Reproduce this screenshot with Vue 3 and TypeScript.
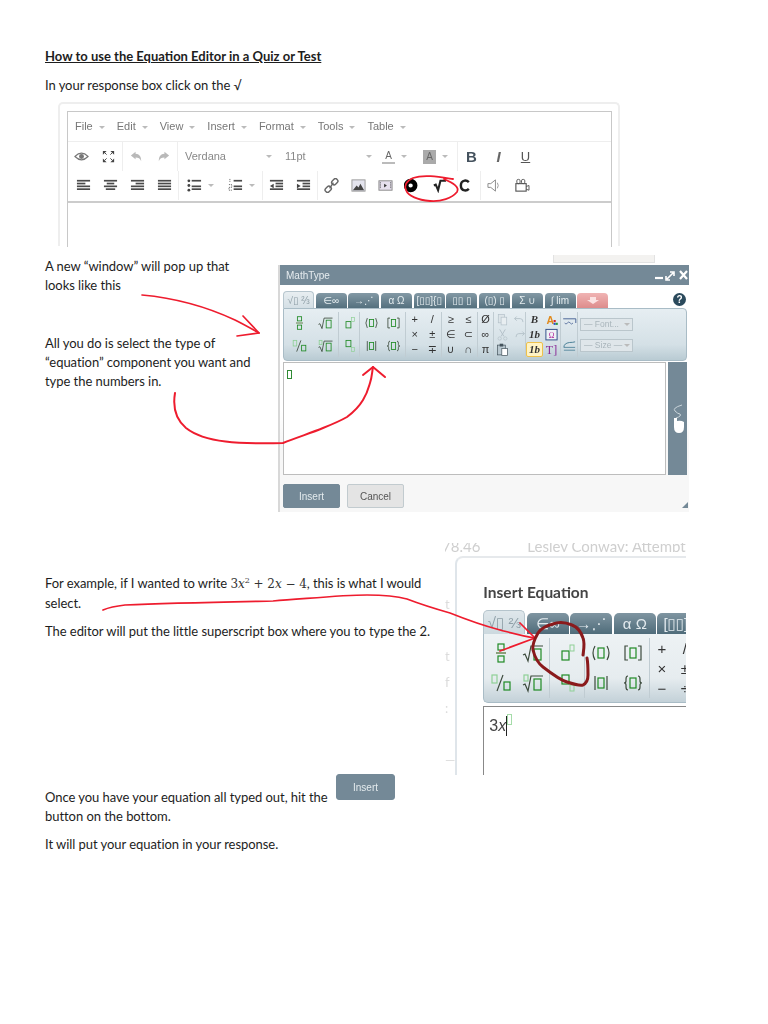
<script setup lang="ts">
type Cell = { i?: string; t?: string; hl?: boolean; serif?: boolean; purple?: boolean }
type Group = { w: number; cols: number; rows: number; cells: Cell[] }

const green = '#1f8a24'
const pale = '#8fd096'
const ink = '#3c4a3c'

function box(x: number, y: number, w: number, h: number, c = green, sw = 1.2) {
  return `<rect x="${x}" y="${y}" width="${w}" height="${h}" fill="none" stroke="${c}" stroke-width="${sw}"/>`
}
function line(d: string, c = ink, sw = 1.2) {
  return `<path d="${d}" fill="none" stroke="${c}" stroke-width="${sw}"/>`
}

/* 公式面板里的小符号 */
const mathIcons: Record<string, string> = {
  frac: box(9, 1, 6, 6) + line('M7 10h10', '#4a6a2a') + box(9, 13, 6, 6),
  sqrt: line('M2 12l2-1 3 7 3-15h12') + box(13, 6, 7, 11),
  slash: box(3, 2, 5, 8, pale) + line('M14 2L8 18') + box(15, 9, 6, 8),
  root: box(3, 2, 4, 6, pale) + line('M2 12l2-1 3 7 3-15h12') + box(13, 6, 7, 11),
  sup: box(7, 8, 7, 9) + box(15, 2, 4, 6, pale, 1),
  sub: box(7, 2, 7, 9) + box(15, 12, 4, 6, pale, 1),
  paren: line('M6 3q-4 7 0 14M18 3q4 7 0 14') + box(9, 5, 6, 10),
  brack: line('M7 3H4v14h3M17 3h3v14h-3') + box(9, 5, 6, 10),
  abs: line('M6 3v14M18 3v14') + box(9, 5, 6, 10),
  brace: line('M7 3q-2 0-2 3v2q0 2-2 2 2 0 2 2v2q0 3 2 3M17 3q2 0 2 3v2q0 2 2 2-2 0-2 2v2q0 3-2 3') + box(9, 5, 6, 10),
  copy: '<rect x="6" y="2" width="9" height="12" fill="#dde5e9" stroke="#b4c1c9"/><rect x="10" y="6" width="8" height="11" fill="#e8eef1" stroke="#b4c1c9"/>',
  cut: line('M8 2l6 10M16 2l-6 10', '#b4c1c9', 1.4) + '<circle cx="8" cy="15" r="2.4" fill="none" stroke="#b4c1c9"/><circle cx="16" cy="15" r="2.4" fill="none" stroke="#b4c1c9"/>',
  paste: '<rect x="5" y="3" width="11" height="14" fill="#b9c8d0" stroke="#44535c"/><rect x="8" y="1" width="5" height="4" fill="#44535c"/><rect x="11" y="8" width="8" height="10" fill="#fff" stroke="#44535c"/>',
  undo: line('M8 5l-3 3 3 3M5 8h8q4 0 4 5', '#b4c1c9', 1.3),
  redo: line('M16 5l3 3-3 3M19 8h-8q-4 0-4 5', '#b4c1c9', 1.3),
  colorA: '<text x="5" y="15" font-size="15" font-weight="700" font-family="Liberation Sans" fill="#e08a1e">A</text><rect x="15" y="10" width="3" height="3" fill="#d22"/><rect x="15" y="14" width="3" height="3" fill="#2a4fd0"/><rect x="18" y="14" width="3" height="3" fill="#2a9a3a"/>',
  omega: '<rect x="4" y="2" width="16" height="15" fill="#eef2f6" stroke="#33508a" stroke-width="1.4"/><text x="12" y="14" text-anchor="middle" font-size="11" font-family="Liberation Serif" fill="#b0289a">Ω</text>',
  rtl: line('M3 4h18v6', '#33508a') + line('M5 10q2 3 4 0t4 0 4 0', '#33508a', 1),
  ltr: line('M4 12q0-6 8-7 5 0 8-1', '#33708a') + line('M4 12h16M4 16h16', '#33708a', 1),
}

const mtGroups: Group[] = [
  { w: 53, cols: 2, rows: 2, cells: [{ i: 'frac' }, { i: 'sqrt' }, { i: 'slash' }, { i: 'root' }] },
  { w: 21, cols: 1, rows: 2, cells: [{ i: 'sup' }, { i: 'sub' }] },
  { w: 46, cols: 2, rows: 2, cells: [{ i: 'paren' }, { i: 'brack' }, { i: 'abs' }, { i: 'brace' }] },
  { w: 36, cols: 2, rows: 3, cells: [{ t: '+' }, { t: '/' }, { t: '×' }, { t: '±' }, { t: '−' }, { t: '∓' }] },
  { w: 36, cols: 2, rows: 3, cells: [{ t: '≥' }, { t: '≤' }, { t: '∈' }, { t: '⊂' }, { t: '∪' }, { t: '∩' }] },
  { w: 16, cols: 1, rows: 3, cells: [{ t: 'Ø' }, { t: '∞' }, { t: 'π' }] },
  { w: 32, cols: 2, rows: 3, cells: [{ i: 'copy' }, { i: 'undo' }, { i: 'cut' }, { i: 'redo' }, { i: 'paste' }, {}] },
  {
    w: 35,
    cols: 2,
    rows: 3,
    cells: [
      { t: 'B', serif: true },
      { i: 'colorA' },
      { t: '1b', serif: true },
      { i: 'omega' },
      { t: '1b', hl: true },
      { t: 'T]', purple: true },
    ],
  },
  { w: 17, cols: 1, rows: 2, cells: [{ i: 'rtl' }, { i: 'ltr' }] },
]

const eqGroups: Group[] = [
  { w: 66, cols: 2, rows: 2, cells: [{ i: 'frac' }, { i: 'sqrt' }, { i: 'slash' }, { i: 'root' }] },
  { w: 35, cols: 1, rows: 2, cells: [{ i: 'sup' }, { i: 'sub' }] },
  { w: 65, cols: 2, rows: 2, cells: [{ i: 'paren' }, { i: 'brack' }, { i: 'abs' }, { i: 'brace' }] },
  { w: 46, cols: 2, rows: 3, cells: [{ t: '+' }, { t: '/' }, { t: '×' }, { t: '±' }, { t: '−' }, { t: '÷' }] },
]

const mtTabs = ['', '∈∞', '→⋰', 'α Ω', '[▯▯]{▯', '▯▯ ▯', '(▯) ▯', 'Σ ∪', '∫ lim', '']
const eqTabs = ['', '∈∞', '→⋰', 'α Ω', '[▯▯]{']

const menus = ['File', 'Edit', 'View', 'Insert', 'Format', 'Tools', 'Table']

const g1 = '#4a4a4a'
const g2 = '#b9b9b9'
function bars(rows: [number, number][], c = g1) {
  return rows.map(([x, w], n) => `<rect x="${x}" y="${2 + n * 3}" width="${w}" height="1.8" fill="${c}"/>`).join('')
}

/* 编辑器工具栏图标 */
const edIcons: Record<string, string> = {
  eye: '<path d="M2 8q7-7 14 0-7 7-14 0z" fill="none" stroke="#777" stroke-width="1.2"/><circle cx="9" cy="8" r="2.6" fill="#777"/>',
  full: '<path d="M3 2h4L3 6zM15 2h-4l4 4zM3 14h4l-4-4zM15 14h-4l4-4z" fill="#444"/><path d="M5 4l2 2M13 4l-2 2M5 12l2-2M13 12l-2-2" stroke="#444"/>',
  undo: `<path d="M8 3L3 7l5 4V9c3 0 5 1 6 4 0-5-2-8-6-8z" fill="${g2}"/>`,
  redo: `<path d="M10 3l5 4-5 4V9c-3 0-5 1-6 4 0-5 2-8 6-8z" fill="${g2}"/>`,
  left: bars([[2, 14], [2, 9], [2, 14], [2, 14]]),
  center: bars([[2, 14], [5, 8], [2, 14], [4, 10]]),
  right: bars([[2, 14], [7, 9], [2, 14], [2, 14]]),
  just: bars([[2, 14], [2, 14], [2, 14], [2, 14]]),
  bullets: bars([[6, 10], [6, 0], [6, 10], [6, 10]]) + '<circle cx="3" cy="3" r="1.5" fill="#444"/><circle cx="3" cy="8" r="1.5" fill="#444"/><circle cx="3" cy="13" r="1.5" fill="#444"/>',
  nums: bars([[7, 9], [7, 0], [7, 9], [7, 9]]) + '<path d="M3 1v4M2 7h3v3H2v3h3" fill="none" stroke="#555" stroke-dasharray="1 1"/>',
  outdent: bars([[2, 14], [8, 8], [8, 8], [2, 14]]) + '<path d="M6 6v5L2 8.5z" fill="#444"/>',
  indent: bars([[2, 14], [8, 8], [8, 8], [2, 14]]) + '<path d="M2 6v5l4-2.5z" fill="#444"/>',
  link: '<g fill="none" stroke="#666" stroke-width="1.5"><rect x="9" y="1.5" width="7" height="5" rx="2.2" transform="rotate(-45 12.5 4)"/><rect x="2" y="9.5" width="7" height="5" rx="2.2" transform="rotate(-45 5.5 12)"/><path d="M7 11l4-6"/></g>',
  image: '<rect x="2" y="2" width="14" height="12" fill="#e4e4ee" stroke="#999"/><path d="M3 13l4-5 2 2 2-4 4 7z" fill="#444"/>',
  media: '<rect x="2" y="3" width="14" height="10" fill="#e6e0ee" stroke="#888"/><path d="M7.5 6v4l3-2z" fill="#333"/><path d="M3.5 4.5v7M14.5 4.5v7" stroke="#555" stroke-dasharray="1.3 1"/>',
  blob: '<ellipse cx="7" cy="8" rx="4.8" ry="4.6" fill="none" stroke="#000" stroke-width="5"/>',
  sqrt: '<path d="M3 8l2-1 2.5 6L10 3h6" fill="none" stroke="#222" stroke-width="2.2"/>',
  c: '<path d="M11.5 4.5Q9.5 2.5 7 2.8 3 3.4 3 8t4 5.2q2.5.3 4.5-1.7" fill="none" stroke="#222" stroke-width="2.6"/>',
  speaker: '<path d="M2 6h3l5-4v12l-5-4H2z" fill="none" stroke="#888"/><path d="M12 5q2 3 0 6" fill="none" stroke="#999"/>',
  video: '<rect x="3" y="6" width="11" height="8" fill="none" stroke="#555" stroke-width="1.2"/><rect x="4" y="1.5" width="3.5" height="4.5" rx="1.5" fill="none" stroke="#555"/><rect x="9" y="1.5" width="3.5" height="4.5" rx="1.5" fill="none" stroke="#555"/><path d="M14 9l3-1v5l-3-1" fill="none" stroke="#555"/>',
}

const row2 = [
  { w: 108, items: ['left', 'center', 'right', 'just'] },
  { w: 83, items: ['bullets', 'nums'], caret: true },
  { w: 54, items: ['outdent', 'indent'] },
  { w: 162, items: ['link', 'image', 'media', 'blob', 'sqrt', 'c'] },
  { w: 54, items: ['speaker', 'video'] },
]

const ghostLetters = ['', '', 't', '', 't', 'f', ':', '', '—']
</script>

<template>
  <div class="page">
    <h1 class="title">How to use the Equation Editor in a Quiz or Test</h1>
    <p class="intro">In your response box click on the √</p>

    <!-- 富文本编辑器截图 -->
    <div class="editor-shot">
      <div class="editor">
        <div class="menubar">
          <span v-for="m in menus" :key="m" class="menu">{{ m }}<i class="caret" /></span>
        </div>
        <div class="tools">
          <div class="tbar tbar-first">
            <div class="tgroup">
              <span class="btn"><svg viewBox="0 0 18 16" v-html="edIcons.eye" /></span>
              <span class="btn"><svg viewBox="0 0 18 16" v-html="edIcons.full" /></span>
            </div>
            <div class="tgroup sep">
              <span class="btn"><svg viewBox="0 0 18 16" v-html="edIcons.undo" /></span>
              <span class="btn"><svg viewBox="0 0 18 16" v-html="edIcons.redo" /></span>
            </div>
            <div class="tgroup sep">
              <span class="pick font-pick">Verdana<i class="caret" /></span>
              <span class="pick size-pick">11pt<i class="caret" /></span>
              <span class="swatch s-text"><b class="a-under">A</b><i class="caret" /></span>
              <span class="swatch s-back"><b class="a-fill">A</b><i class="caret" /></span>
            </div>
            <div class="tgroup sep style-btns">
              <span class="btn fmt fmt-b">B</span>
              <span class="btn fmt fmt-i">I</span>
              <span class="btn fmt fmt-u">U</span>
            </div>
          </div>
          <div class="tbar">
            <div
              v-for="(g, n) in row2"
              :key="n"
              class="tgroup"
              :class="{ sep: n > 0 }"
              :style="{ width: g.w + 'px' }"
            >
              <span v-for="it in g.items" :key="it" class="btn" :class="{ 'btn-wide': g.caret }">
                <svg viewBox="0 0 18 16" v-html="edIcons[it]" />
                <i v-if="g.caret" class="caret" />
              </span>
            </div>
          </div>
        </div>
        <div class="edit-area" />
      </div>
    </div>

    <section class="mt-section">
      <div class="col-a">
        <p>A new “window” will pop up that<br />looks like this</p>
        <p class="gap-big">All you do is select the type of<br />“equation” component you want and<br />type the numbers in.</p>
      </div>
      <div class="strip" />

      <!-- MathType 窗口 -->
      <div class="mt-win">
        <div class="mt-title">
          <span>MathType</span>
          <svg viewBox="0 0 34 12" width="34" height="12">
            <path d="M1 9h8" stroke="#fff" stroke-width="2.2" />
            <path d="M13 10l6-6M16 3h4v4M12 7v4h4" stroke="#fff" stroke-width="1.6" fill="none" />
            <path d="M26 2l7 8M33 2l-7 8" stroke="#fff" stroke-width="2.2" />
          </svg>
        </div>
        <div class="mt-body">
          <div class="mt-tabs">
            <span
              v-for="(t, n) in mtTabs"
              :key="n"
              class="tab"
              :class="{ 'tab-on': n === 0, 'tab-red': n === 9 }"
            >
              <template v-if="n === 0">√▯ ⅔</template>
              <svg v-else-if="n === 9" viewBox="0 0 18 10" width="18" height="10">
                <path d="M6 1h6v3h3l-6 4-6-4h3z" fill="#fbe3e3" />
              </svg>
              <template v-else>{{ t }}</template>
            </span>
            <span class="help">?</span>
          </div>
          <div class="mt-panel">
            <div
              v-for="(g, n) in mtGroups"
              :key="n"
              class="pal-group"
              :style="{
                width: g.w + 'px',
                gridTemplateColumns: `repeat(${g.cols}, 1fr)`,
                gridTemplateRows: `repeat(${g.rows}, 1fr)`,
              }"
            >
              <span
                v-for="(c, k) in g.cells"
                :key="k"
                class="cell"
                :class="{ 'cell-hl': c.hl, 'cell-serif': c.serif, 'cell-purple': c.purple }"
              >
                <svg v-if="c.i" viewBox="0 0 24 20" width="17" height="14" v-html="mathIcons[c.i]" />
                <template v-else>{{ c.t }}</template>
              </span>
            </div>
            <div class="selects">
              <span class="sel">— Font...<i class="caret" /></span>
              <span class="sel">— Size —<i class="caret" /></span>
            </div>
          </div>
          <div class="mt-edit">
            <div class="mt-input"><i class="mt-slot" /></div>
            <div class="mt-side">
              <svg viewBox="0 0 18 30" width="18" height="30">
                <path d="M13 1Q3 4 6 7t5 3q2 2-4 4" fill="none" stroke="#c9d4da" stroke-width="1" />
                <path d="M5 14v9q0 6 5 6t5-6v-5q-3-2-7-1v-3z" fill="#fff" />
              </svg>
            </div>
          </div>
          <div class="mt-actions">
            <button class="btn-insert">Insert</button>
            <button class="btn-cancel">Cancel</button>
          </div>
          <i class="resize" />
        </div>
      </div>
    </section>

    <section class="eq-section">
      <div class="col-b">
        <p>
          For example, if I wanted to write
          <span class="formula">3<em>x</em><sup>2</sup> + 2<em>x</em> − 4</span>, this is what I would<br />select.
        </p>
        <p class="gap-small">The editor will put the little superscript box where you to type the 2.</p>
      </div>

      <!-- Insert Equation 截图 -->
      <div class="eq-shot">
        <div class="ghost-head"><span>78.46</span><span>Lesley Conway: Attempt</span></div>
        <div class="eq-main">
          <div class="ghost-col">
            <span v-for="(l, n) in ghostLetters" :key="n">{{ l }}</span>
          </div>
          <div class="eq-win">
            <div class="eq-title">Insert Equation</div>
            <div class="eq-tabs">
              <span v-for="(t, n) in eqTabs" :key="n" class="eq-tab" :class="{ 'tab-on': n === 0 }">
                <template v-if="n === 0">√▯ ⅔</template>
                <template v-else>{{ t }}</template>
              </span>
            </div>
            <div class="eq-panel">
              <div
                v-for="(g, n) in eqGroups"
                :key="n"
                class="pal-group"
                :style="{
                  width: g.w + 'px',
                  gridTemplateColumns: `repeat(${g.cols}, 1fr)`,
                  gridTemplateRows: `repeat(${g.rows}, 1fr)`,
                }"
              >
                <span v-for="(c, k) in g.cells" :key="k" class="cell">
                  <svg v-if="c.i" viewBox="0 0 24 20" width="24" height="20" v-html="mathIcons[c.i]" />
                  <template v-else>{{ c.t }}</template>
                </span>
              </div>
            </div>
            <div class="eq-input">
              <span class="eq-value">3<em>x</em></span><i class="eq-cursor" /><i class="eq-slot" />
            </div>
          </div>
        </div>
      </div>
    </section>

    <section class="last-section">
      <div class="col-c">
        <p>Once you have your equation all typed out, hit the<br />button on the bottom.</p>
        <p class="gap-small">It will put your equation in your response.</p>
      </div>
      <button class="btn-insert btn-lone">Insert</button>
    </section>

    <!-- 手绘批注 -->
    <svg class="notes" viewBox="0 0 768 1024" width="768" height="1024" aria-hidden="true">
      <g fill="none" stroke="#ee1c2e" stroke-linecap="round" stroke-linejoin="round">
        <path stroke-width="1.8" d="M453 179C440 177 424 174 413 178C406 181 404 186 406 190C408 196 418 200 430 201C441 202 452 198 457 192C460 187 453 183 444 179" />
        <path stroke-width="1.7" d="M142 295C175 298 205 306 235 320C245 325 252 329 259 333" />
        <path stroke-width="1.7" d="M243 316L259 333L237 336" />
        <path stroke-width="2" d="M175 393C173 405 174 418 186 428C205 443 240 444 283 443C298 437 311 433 323 428C333 424 340 421 347 417C355 411 360 405 363 400C368 392 369 386 370 383C372 377 372 372 373 367" />
        <path stroke-width="2" d="M363 375L373 367L385 377" />
        <path stroke-width="1.7" d="M103 610C110 607 116 606 125 605C170 603 225 602 273 601C305 599 340 595 367 595C385 595 396 596 407 599C420 604 436 609 450 613C465 619 485 626 500 630C512 633 523 636 535 638" />
        <path stroke-width="1.7" d="M520 623L535 638L500 651" />
      </g>
      <path
        d="M583 655C584 648 585 643 583 638C581 632 577 627 572 625C565 622 558 622 553 624C545 626 540 630 538 633C534 640 532 645 533 650C535 658 539 664 543 667C552 674 560 680 567 682C573 684 579 686 583 685C587 683 588 680 588 675C588 668 588 663 587 658"
        fill="none"
        stroke="#8a1a1c"
        stroke-width="3"
        stroke-linecap="round"
      />
    </svg>
  </div>
</template>

<style scoped>
.page {
  position: relative;
  box-sizing: border-box;
  width: 768px;
  height: 1024px;
  padding: 47px 0 0 45px;
  overflow: hidden;
  background: #fff;
  color: #1d1d1d;
  font-family: Lato, "Liberation Sans", sans-serif;
  font-size: 13px;
  line-height: 19px;
}

p {
  margin: 0;
  white-space: nowrap;
  letter-spacing: -0.05px;
}

.title {
  margin: 0;
  font-size: 13px;
  line-height: 19px;
  font-weight: 700;
  text-decoration: underline;
}

.intro {
  margin-top: 10px;
}

.caret {
  display: inline-block;
  width: 0;
  height: 0;
  margin-left: 6px;
  vertical-align: middle;
  border-left: 3px solid transparent;
  border-right: 3px solid transparent;
  border-top: 3px solid #bbb;
}

/* editor screenshot */
.editor-shot {
  box-sizing: border-box;
  width: 562px;
  height: 144px;
  margin: 7px 0 0 13px;
  padding: 7px 6px 0 7px;
  border: 2px solid #eee;
  border-bottom: 0;
  border-radius: 5px 5px 0 0;
  filter: blur(0.4px);
}

.editor {
  height: 100%;
  border: 1px solid #c8c8c8;
  border-bottom: 0;
  font-family: "Liberation Sans", sans-serif;
  color: #777;
}

.menubar {
  display: flex;
  align-items: center;
  height: 29px;
  padding-left: 7px;
  gap: 12px;
  font-size: 11px;
  border-bottom: 1px solid #eee;
}

.menu {
  white-space: nowrap;
}

.tools {
  height: 59px;
  border-bottom: 2px solid #ccc;
}

.tbar {
  display: flex;
  height: 29px;
  padding-left: 2px;
}

.tbar-first {
  padding-left: 0;
}

.tgroup {
  display: flex;
  align-items: center;
}

.sep {
  border-left: 1px solid #eee;
}

.btn {
  display: flex;
  align-items: center;
  justify-content: center;
  flex: 0 0 auto;
  width: 27px;
  height: 100%;
}

.btn svg {
  width: 17px;
  height: 15px;
}

.btn-wide {
  width: 41px;
}

.btn-wide .caret {
  margin-left: 5px;
}

.pick {
  display: flex;
  align-items: center;
  justify-content: space-between;
  box-sizing: border-box;
  padding: 0 6px 0 7px;
  font-size: 11px;
  color: #888;
}

.font-pick {
  width: 100px;
}

.size-pick {
  width: 100px;
}

.swatch {
  display: flex;
  align-items: center;
  box-sizing: border-box;
  height: 100%;
}

.s-text {
  width: 39px;
  padding-left: 4px;
}

.s-back {
  width: 40px;
  padding-left: 6px;
}

.swatch b {
  width: 13px;
  font-size: 10px;
  line-height: 13px;
  font-weight: 400;
  text-align: center;
  color: #666;
}

.a-under {
  border-bottom: 2px solid #bbb;
}

.a-fill {
  height: 14px;
  background: #aaa;
}

.fmt {
  font-size: 15px;
  color: #555;
}

.fmt-b {
  font-weight: 700;
  color: #45525e;
}

.fmt-i {
  font-style: italic;
  font-weight: 700;
  color: #666;
}

.fmt-u {
  font-size: 13px;
  text-decoration: underline;
}

/* MathType section */
.mt-section {
  position: relative;
  display: flex;
  margin-top: 9px;
}

.col-a {
  flex: 0 0 233px;
  padding-top: 2px;
}

.gap-big {
  margin-top: 39px;
}

.gap-small {
  margin-top: 9px;
}

.strip {
  position: absolute;
  left: 508px;
  top: 0;
  width: 102px;
  height: 8px;
  background: #f3f2f0;
  border: 1px solid #e2e2e2;
  border-top: 0;
  box-sizing: border-box;
}

.mt-win {
  display: flex;
  flex-direction: column;
  box-sizing: border-box;
  width: 411px;
  height: 247px;
  margin-top: 10px;
  border-left: 2px solid #d8d8d8;
  font-family: "Liberation Sans", "DejaVu Sans", sans-serif;
  filter: blur(0.4px);
}

.mt-title {
  display: flex;
  align-items: center;
  justify-content: space-between;
  height: 20px;
  flex: 0 0 20px;
  padding: 0 1px 0 6px;
  background: #748997;
  color: #e6ecef;
  font-size: 10px;
}

.mt-body {
  position: relative;
  flex: 1;
  padding: 6px 2px 0 3px;
  background: linear-gradient(#fff 55%, #f7f7f7 70%);
}

.mt-tabs {
  display: flex;
  gap: 1.7px;
  height: 17px;
  align-items: flex-end;
}

.tab {
  display: flex;
  align-items: center;
  justify-content: center;
  box-sizing: border-box;
  width: 31px;
  height: 15px;
  border-radius: 4px 4px 0 0;
  background: linear-gradient(#8399a5, #54707e);
  color: #e4ecef;
  font-size: 10px;
  white-space: nowrap;
  overflow: hidden;
}

.tab-on {
  height: 17px;
  background: linear-gradient(#e8eef1, #d4dfe5);
  color: #90a0a8;
  border: 1px solid #b7c6ce;
  border-bottom: 0;
}

.tab-red {
  background: linear-gradient(#f0b4b4, #dd8c8c);
}

.help {
  margin: 0 0 2px auto;
  width: 13px;
  height: 13px;
  margin-right: 1px;
  border-radius: 50%;
  background: #2b4a5c;
  color: #fff;
  font-size: 10px;
  line-height: 13px;
  font-weight: 700;
  text-align: center;
}

.mt-panel {
  display: flex;
  box-sizing: border-box;
  height: 53px;
  padding: 3px 0 3px 2px;
  background: linear-gradient(#e6eef2, #d4e0e6 70%, #b9cbd3);
  border: 1px solid #a9bcc6;
  border-radius: 0 4px 4px 4px;
}

.pal-group {
  display: grid;
  box-sizing: border-box;
  flex: 0 0 auto;
  align-items: center;
  justify-items: center;
  border-right: 1px solid #c0ccd2;
}

.cell {
  display: flex;
  align-items: center;
  justify-content: center;
  font-size: 11px;
  line-height: 1;
  color: #333;
}

.cell svg {
  display: block;
}

.cell-serif {
  font-family: "Liberation Serif", serif;
  font-weight: 700;
  font-style: italic;
}

.cell-purple {
  font-family: "Liberation Serif", serif;
  font-size: 12px;
  color: #8a2a96;
}

.cell-hl {
  padding: 1px 2px;
  background: #fff3c4;
  border: 1px solid #eec14b;
  border-radius: 2px;
  font-weight: 700;
  font-family: "Liberation Serif", serif;
  font-style: italic;
}

.selects {
  display: flex;
  flex-direction: column;
  justify-content: space-between;
  padding: 6px 0 5px 2px;
}

.sel {
  display: flex;
  align-items: center;
  justify-content: space-between;
  box-sizing: border-box;
  width: 53px;
  height: 13px;
  padding: 0 2px 0 3px;
  background: #dfe6ea;
  border: 1px solid #bac6cc;
  color: #a9b5bb;
  font-size: 8.5px;
  white-space: nowrap;
}

.sel .caret {
  margin-left: 0;
}

.mt-edit {
  display: flex;
  height: 113px;
  margin-top: 1px;
  gap: 2px;
}

.mt-input {
  flex: 0 0 383px;
  box-sizing: border-box;
  padding: 7px 0 0 3px;
  background: #fff;
  border: 1px solid #bdbdbd;
}

.mt-slot {
  display: block;
  width: 3px;
  height: 7px;
  border: 1px solid #2f8a34;
}

.mt-side {
  display: flex;
  align-items: center;
  justify-content: center;
  flex: 0 0 19px;
  height: 113px;
  background: #748997;
}

.mt-actions {
  display: flex;
  gap: 7px;
  margin-top: 9px;
}

.btn-insert,
.btn-cancel {
  height: 24px;
  padding: 0;
  border-radius: 2px;
  font-family: "Liberation Sans", sans-serif;
  font-size: 10px;
}

.btn-insert {
  width: 57px;
  border: 1px solid #748997;
  background: #748997;
  color: #e4ebee;
}

.btn-cancel {
  width: 57px;
  border: 1px solid #c2cbcf;
  background: #e4e4e4;
  color: #555;
}

.resize {
  position: absolute;
  right: 1px;
  bottom: 4px;
  width: 0;
  height: 0;
  border-left: 6px solid transparent;
  border-bottom: 6px solid #748997;
}

/* Insert Equation section */
.eq-section {
  display: flex;
  margin-top: 31px;
  height: 232px;
}

.col-b {
  flex: 0 0 400px;
  padding-top: 31px;
}

.formula {
  font-family: "DejaVu Serif", "Liberation Serif", serif;
  font-size: 12px;
  color: #333;
}

.formula sup {
  font-size: 8px;
  line-height: 0;
}

.eq-shot {
  width: 241px;
  overflow: hidden;
  filter: blur(0.4px);
}

.ghost-head {
  display: flex;
  gap: 47px;
  height: 9px;
  margin-left: -3px;
  overflow: hidden;
  font-size: 15px;
  line-height: 6px;
  color: #cfcfcf;
  white-space: nowrap;
}

.eq-main {
  display: flex;
  height: 223px;
}

.ghost-col {
  display: flex;
  flex-direction: column;
  flex: 0 0 10px;
  margin-top: -13px;
  font-size: 13px;
  color: #dcdcdc;
}

.ghost-col span {
  height: 26px;
  line-height: 26px;
}

.eq-win {
  flex: 1;
  margin-top: 4px;
  padding: 24px 0 0 26px;
  border-left: 2px solid #dfe5ea;
  border-top: 2px solid #e6e9ec;
  border-top-left-radius: 8px;
  min-width: 0;
}

.eq-title {
  height: 20px;
  font-size: 15.5px;
  line-height: 20px;
  font-weight: 700;
  color: #454545;
}

.eq-tabs {
  display: flex;
  gap: 1.5px;
  align-items: flex-end;
  height: 24px;
  margin-top: 8px;
  width: 210px;
  font-family: "Liberation Sans", "DejaVu Sans", sans-serif;
}

.eq-tab {
  display: flex;
  align-items: center;
  justify-content: center;
  flex: 0 0 42px;
  height: 21px;
  border-radius: 5px 5px 0 0;
  background: linear-gradient(#7f95a1, #4f6c7a);
  color: #e2eaee;
  font-size: 15px;
  white-space: nowrap;
  overflow: hidden;
}

.eq-tab.tab-on {
  height: 24px;
  background: linear-gradient(#dfe7eb, #ccd9df);
  color: #8fa0a8;
  border: 1px solid #b5c4cc;
  border-bottom: 0;
  box-sizing: border-box;
}

.eq-panel {
  display: flex;
  box-sizing: border-box;
  width: 212px;
  height: 69px;
  padding: 4px 0;
  font-family: "Liberation Sans", "DejaVu Sans", sans-serif;
  background: linear-gradient(#edf2f4, #e6ecef 65%, #c3d1d8);
  border-left: 1px solid #a9bcc6;
  border-bottom: 1px solid #a9bcc6;
  border-bottom-left-radius: 5px;
}

.eq-panel .pal-group:last-child {
  border-right: 0;
}

.eq-panel .cell {
  font-size: 15px;
}

.eq-input {
  position: relative;
  height: 69px;
  margin-top: 3px;
  padding: 9px 0 0 5px;
  border-left: 1px solid #888;
  border-top: 1px solid #888;
  font-family: "Liberation Sans", sans-serif;
  font-size: 16px;
  line-height: 20px;
  color: #444;
}

.eq-cursor {
  position: absolute;
  left: 22px;
  top: 9px;
  width: 1px;
  height: 20px;
  background: #222;
}

.eq-slot {
  position: absolute;
  left: 23px;
  top: 7px;
  width: 3px;
  height: 9px;
  border: 1px solid #a5dca9;
}

/* last block */
.last-section {
  display: flex;
  align-items: flex-start;
  margin-top: -1px;
}

.col-c {
  flex: 0 0 291px;
  padding-top: 14px;
}

.btn-lone {
  width: 59px;
  height: 26px;
  filter: blur(0.3px);
  border-radius: 3px;
}

.notes {
  position: absolute;
  left: 0;
  top: 0;
  pointer-events: none;
}
</style>
